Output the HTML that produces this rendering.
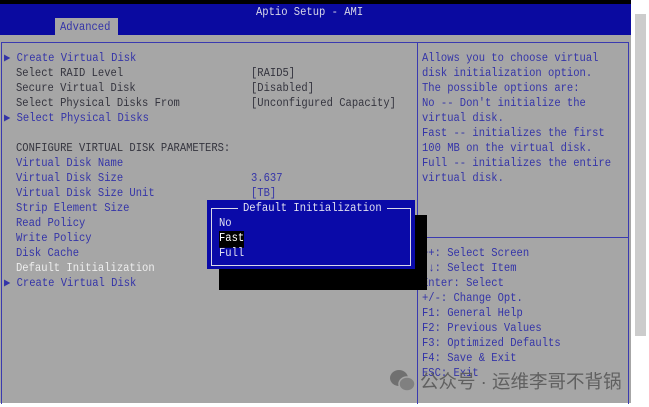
<!DOCTYPE html>
<html><head><meta charset="utf-8"><style>
*{margin:0;padding:0;box-sizing:border-box}
body{width:649px;height:407px;background:#fff;position:relative;overflow:hidden;font-family:"Liberation Mono",monospace;font-size:10.5px}
.a{position:absolute;white-space:pre;line-height:15px;transform:scaleY(1.12);transform-origin:0 0}
.b{color:#3434a8}.g{color:#34343e}.w{color:#eee}
</style></head><body>
<div style="position:absolute;left:0;top:0;width:631px;height:403px;background:#a6a6a6"></div>
<div style="position:absolute;left:0;top:0;width:631px;height:4px;background:#000"></div>
<div style="position:absolute;left:0;top:4px;width:631px;height:31px;background:#0a0aa0"></div>
<div class="a w" style="left:256px;top:5px;color:#d8d8e8">Aptio Setup - AMI</div>
<div style="position:absolute;left:55px;top:18px;width:63px;height:17px;background:#a6a6a6"></div>
<div class="a b" style="left:60px;top:20px">Advanced</div>
<div style="position:absolute;left:1px;top:42px;width:628px;height:362px;border:1px solid #3a3ab0;border-bottom:none"></div>
<div style="position:absolute;left:417px;top:42px;width:1px;height:362px;background:#3a3ab0"></div>
<div style="position:absolute;left:418px;top:237px;width:210px;height:1px;background:#3a3ab0"></div>
<div style="position:absolute;top:0;left:0;transform:translateY(1px)">
<div class="a b" style="left:4px;top:50px">▶ Create Virtual Disk</div>
<div class="a g" style="left:16px;top:65px">Select RAID Level</div>
<div class="a g" style="left:16px;top:80px">Secure Virtual Disk</div>
<div class="a g" style="left:16px;top:95px">Select Physical Disks From</div>
<div class="a b" style="left:4px;top:110px">▶ Select Physical Disks</div>
<div class="a g" style="left:16px;top:140px">CONFIGURE VIRTUAL DISK PARAMETERS:</div>
<div class="a b" style="left:16px;top:155px">Virtual Disk Name</div>
<div class="a b" style="left:16px;top:170px">Virtual Disk Size</div>
<div class="a b" style="left:16px;top:185px">Virtual Disk Size Unit</div>
<div class="a b" style="left:16px;top:200px">Strip Element Size</div>
<div class="a b" style="left:16px;top:215px">Read Policy</div>
<div class="a b" style="left:16px;top:230px">Write Policy</div>
<div class="a b" style="left:16px;top:245px">Disk Cache</div>
<div class="a w" style="left:16px;top:260px">Default Initialization</div>
<div class="a b" style="left:4px;top:275px">▶ Create Virtual Disk</div>
<div class="a g" style="left:251px;top:65px">[RAID5]</div>
<div class="a g" style="left:251px;top:80px">[Disabled]</div>
<div class="a g" style="left:251px;top:95px">[Unconfigured Capacity]</div>
<div class="a b" style="left:251px;top:170px">3.637</div>
<div class="a b" style="left:251px;top:185px">[TB]</div>
<div class="a b" style="left:422px;top:50px">Allows you to choose virtual</div>
<div class="a b" style="left:422px;top:65px">disk initialization option.</div>
<div class="a b" style="left:422px;top:80px">The possible options are:</div>
<div class="a b" style="left:422px;top:95px">No -- Don't initialize the</div>
<div class="a b" style="left:422px;top:110px">virtual disk.</div>
<div class="a b" style="left:422px;top:125px">Fast -- initializes the first</div>
<div class="a b" style="left:422px;top:140px">100 MB on the virtual disk.</div>
<div class="a b" style="left:422px;top:155px">Full -- initializes the entire</div>
<div class="a b" style="left:422px;top:170px">virtual disk.</div>
<div class="a b" style="left:422px;top:245px">++: Select Screen</div>
<div class="a b" style="left:422px;top:260px">↑↓: Select Item</div>
<div class="a b" style="left:422px;top:275px">Enter: Select</div>
<div class="a b" style="left:422px;top:290px">+/-: Change Opt.</div>
<div class="a b" style="left:422px;top:305px">F1: General Help</div>
<div class="a b" style="left:422px;top:320px">F2: Previous Values</div>
<div class="a b" style="left:422px;top:335px">F3: Optimized Defaults</div>
<div class="a b" style="left:422px;top:350px">F4: Save &amp; Exit</div>
<div class="a b" style="left:422px;top:365px">ESC: Exit</div>
</div>
<div style="position:absolute;left:219px;top:215px;width:208px;height:75px;background:#000"></div>
<div style="position:absolute;left:207px;top:200px;width:208px;height:69px;background:#0a0aa8"></div>
<div style="position:absolute;left:211px;top:208px;width:200px;height:58px;border:1px solid #d8d8e8"></div>
<div class="a" style="left:238px;top:201px;background:#0a0aa8;color:#e0e0f0;padding:0 5px">Default Initialization</div>
<div class="a" style="left:219px;top:216px;color:#e0e0f0">No</div>
<div class="a" style="left:219px;top:231px;color:#fff;background:#000">Fast</div>
<div class="a" style="left:219px;top:246px;color:#e0e0f0">Full</div>
<div style="position:absolute;left:635px;top:14px;width:11px;height:322px;background:#ccc"></div>
<svg style="position:absolute;left:389px;top:369px" width="28" height="24" viewBox="0 0 28 24"><ellipse cx="10" cy="9" rx="9" ry="8" fill="#707070"/><ellipse cx="18" cy="15" rx="8" ry="7" fill="#808080" stroke="#a6a6a6" stroke-width="1.5"/></svg>
<div style="position:absolute;left:420px;top:370px;white-space:pre;font-family:'Liberation Sans','Noto Sans CJK SC',sans-serif;font-size:18.5px;line-height:24px;color:#606060">公众号 · 运维李哥不背锅</div>
</body></html>
